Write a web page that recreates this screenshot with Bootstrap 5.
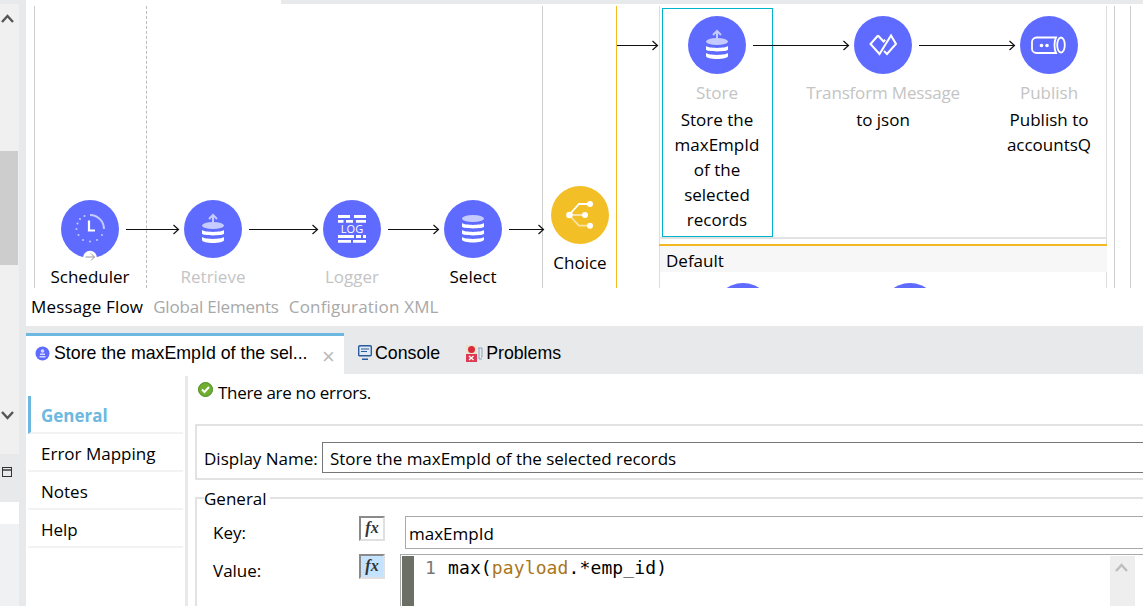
<!DOCTYPE html>
<html lang="en">
<head>
<meta charset="utf-8">
<title>Flow editor</title>
<link href="https://cdn.jsdelivr.net/npm/bootstrap@5.3.0/dist/css/bootstrap.min.css" rel="stylesheet">
<style>
html,body{height:606px;overflow:hidden;background:#fff}
body{font-family:"Open Sans","Noto Sans",sans-serif;font-size:17px;color:#000;line-height:25px}
.rail{width:26px;height:606px;background:#e8e9eb;flex:none}
.rail-track{width:19px;height:450px;margin-top:4px;background:#f0f0f0;position:relative;overflow:hidden}
.rail-thumb{width:18px;height:114px;margin-top:128px;background:#cdcdcd}
.rail-chev{display:block;margin:10px 0 0 1px}
.rail-chev2{display:block;margin:146px 0 0 1px}
.rail-min{width:19px;height:48px;padding:13px 2px 0 2px}
.rail-white{width:19px;height:22px;background:#fff}
.rail-low{width:19px;height:82px;background:#f0f1f3}
.mainc{width:1117px;height:606px;flex:none;overflow:hidden}
.top-strip{height:4px}
.top-strip-w{width:255px;background:#fff}
.top-strip-g{flex:1;background:#e8e9eb}
.canvasz{height:284px;position:relative;overflow:hidden;background:#fff}
.wires{position:absolute;left:0;top:0}
.vline{position:absolute;top:2px;bottom:0;width:1px;background:#ccc}
.vdash{background:none;border-left:1px dashed #bbb}
.vgold{background:#f4b921}
.vlight{background:#ddd}
.selbox{position:absolute;left:636px;top:4px;width:111px;height:229px;border:1.5px solid #00b4cc}
.hgray{position:absolute;left:633px;top:233px;width:448px;height:2px;background:#e2e2e2}
.hgold{position:absolute;left:633px;top:240px;width:448px;height:2px;background:#f4b921}
.defhead{position:absolute;left:634px;top:242px;width:447px;height:26px;background:#f7f7f7;padding-left:6px;line-height:30px}
.nodez{position:absolute;width:170px;margin-left:-85px;text-align:center}
.nodez svg{display:block;margin:0 auto 6px}
.dimz{color:#c4c4c4}
.node-text{width:95px;margin:2px auto 0}
.sched-name{margin-top:-8px}
.transform-name{letter-spacing:-.17px}
.flowtabs{height:38px;padding:6px 0 0 5px;gap:10px;color:#a8a8a8;background:#fff}
.flowtabs .on{color:#000;letter-spacing:.17px}
.ft-global{letter-spacing:-.2px}
.ft-config{letter-spacing:.18px}
.tabbar{height:48px;background:#e8e9eb;padding-top:7px;font-family:"Liberation Sans",Arial,sans-serif;font-size:17.75px}
.tab-act{width:318px;height:41px;background:#fff;border-top:3px solid #6cb8e0;padding:0 0 4px 9px;position:relative}
.tab-act span,.tab-oth span{line-height:30px}
.tab-act span.tab-x{position:absolute;left:296px;top:4px;color:#bbb;font-size:22px;line-height:34px}
.tab-oth{height:41px;padding:3px 0 4px;gap:3px}
.tab-console{margin-left:14px}
.tab-problems{margin-left:26px}
.panelz{height:232px}
.sidez{width:159px;flex:none;padding:22px 2px 0 2px}
.side-row{height:38px;border-bottom:2px solid #f3f3f3;padding:7px 0 0 13px;font-size:17px}
.side-on{border-left:3px solid #6cb8e0;padding-left:10px;color:#6cb8e0;font-weight:700}
.sepz{width:3px;background:#e8e9eb;height:232px;flex:none;margin-top:2px}
.formz{flex:1;padding:6px 0 0 7px;min-width:0}
.okrow{height:40px;gap:5px;padding:0 0 0 3px}
.okicon{margin-top:2px}
.oktext{line-height:26px;letter-spacing:-.3px}
.grp1{height:56px;border:2px solid #e2e2e2;border-right:0;margin:4px 0 0 0;padding:16px 0 0 7px}
.lbl1{width:118px;flex:none;padding-top:4px}
.inp-n{flex:1;height:31px;border:1px solid #777;border-right:0;padding:0 7px;line-height:31px;letter-spacing:-.03px}
.grp2{border:2px solid #e2e2e2;border-right:0;border-bottom:0;margin-top:17px;height:120px;position:relative;padding:17px 0 0 16px}
.legendz{position:absolute;left:7px;top:-12px;background:#fff;padding-right:3px;line-height:24px}
.rowk{width:146px;flex:none;padding-top:4px}
.rowv{margin-top:5px}
.fxb{width:26px;height:25px;flex:none;border:2px solid;border-color:#8a8a8a #e0e0e0 #e0e0e0 #8a8a8a;background:#fff;color:#333;font-family:"Liberation Serif",serif;font-style:italic;font-weight:700;font-size:16px;line-height:19px;text-align:center}
.fxb-on{background:#c5e3ff}
.inp-k{flex:1;height:33px;margin-left:20px;border:1px solid #aaa;border-right:0;padding:4px 3px;line-height:26px}
.editz{flex:1;margin-left:15px;height:60px;border-top:1px solid #aaa;border-left:1px solid #aaa;padding-top:1px;font-family:"DejaVu Sans Mono",monospace;font-size:18px;line-height:24px}
.gutterz{width:12px;flex:none;margin-left:1px;background:#6b6f66}
.lineno{color:#777;width:34px;padding-left:11px;flex:none}
.codez{flex:1;letter-spacing:.12px}
.kwz{color:#a9761a}
.sbz{width:25px;flex:none;margin-right:8px;background:#eee;padding:7px 0 0 5px}
</style>
</head>
<body>
<div class="d-flex">
  <div class="rail d-flex flex-column">
    <div class="rail-track">
      <svg class="rail-chev" width="13" height="9" viewBox="0 0 13 9"><path d="M1 8l5.500-6L12 8" fill="none" stroke="#555" stroke-width="2.400"/></svg>
      <div class="rail-thumb"></div>
      <svg class="rail-chev2" width="13" height="9" viewBox="0 0 13 9"><path d="M1 1l5.500 6L12 1" fill="none" stroke="#555" stroke-width="2.400"/></svg>
    </div>
    <div class="rail-min"><svg class="d-block" width="11" height="11" viewBox="0 0 11 11"><rect x=".5" y=".5" width="9" height="9" fill="none" stroke="#333"/><path d="M0 3h10" stroke="#333" stroke-width="1.400"/></svg></div>
    <div class="rail-white"></div>
    <div class="rail-low"></div>
  </div>
  <div class="mainc d-flex flex-column">
    <div class="top-strip d-flex"><div class="top-strip-w"></div><div class="top-strip-g"></div></div>
    <div class="canvasz">
      <div class="vline" style="left:8px"></div>
      <div class="vline vdash" style="left:120px"></div>
      <div class="vline" style="left:516px"></div>
      <div class="vline vgold" style="left:590px"></div>
      <div class="vline vlight" style="left:633px"></div>
      <div class="vline vlight" style="left:1080px"></div>
      <div class="vline" style="left:1088px"></div>
      <div class="vline" style="left:1104px"></div>
      <div class="selbox"></div>
      <div class="hgray"></div>
      <div class="hgold"></div>
      <div class="defhead">Default</div>
      <svg class="wires" width="1117" height="284" viewBox="0 0 1117 284" fill="none" stroke="#111" stroke-width="1.200">
        <path d="M100 225.500h52M147.500 221l5 4.500-5 4.500"/>
        <path d="M223 225.500h68M286.500 221l5 4.500-5 4.500"/>
        <path d="M362 225.500h50M407.500 221l5 4.500-5 4.500"/>
        <path d="M483 225.500h34M512.500 221l5 4.500-5 4.500"/>
        <path d="M591 41.500h40M626.500 37l5 4.500-5 4.500"/>
        <path d="M727 41.500h95M817.500 37l5 4.500-5 4.500"/>
        <path d="M893 41.500h95M983.500 37l5 4.500-5 4.500"/>
        <circle cx="717" cy="308" r="29" fill="#5f6bff" stroke="none"/>
        <circle cx="884" cy="308" r="29" fill="#5f6bff" stroke="none"/>
      </svg>

      <div class="nodez" style="left:64px;top:196px">
        <svg width="58" height="72" viewBox="0 0 58 72" style="margin-bottom:0;overflow:visible">
          <circle cx="29" cy="29" r="29" fill="#5f6bff"/>
          <path d="M29 15a14 14 0 0 1 14 14" fill="none" stroke="#c5caff" stroke-width="2"/>
          <g fill="#c5caff"><circle cx="19" cy="19" r="1"/><circle cx="15.500" cy="29" r="1"/><circle cx="16.500" cy="23.500" r="1"/><circle cx="17.500" cy="35" r="1"/><circle cx="22" cy="40" r="1"/><circle cx="29" cy="41.500" r="1"/><circle cx="36" cy="40" r="1"/><circle cx="41" cy="35" r="1"/><circle cx="23.500" cy="16" r="1"/></g>
          <path d="M28 20.500v10h6" fill="none" stroke="#fff" stroke-width="2.200"/>
          <circle cx="29" cy="57.500" r="6.800" fill="#fff"/>
          <path d="M24.500 57h9M30 53.500l3.500 3.500-3.500 3.500" fill="none" stroke="#999" stroke-width="1"/>
        </svg>
        <div class="sched-name">Scheduler</div>
      </div>

      <div class="nodez" style="left:187px;top:196px">
        <svg width="58" height="58" viewBox="0 0 58 58">
          <circle cx="29" cy="29" r="29" fill="#5f6bff"/>
          <path d="M29 23v-8M25 19l4-4 4 4" fill="none" stroke="#c5caff" stroke-width="2"/>
          <ellipse cx="29" cy="25.500" rx="11" ry="3.600" fill="#c5caff"/>
          <path d="M18 30c3 2.500 19 2.500 22 0v3.500c0 2.500-22 2.500-22 0zM18 37c3 2.500 19 2.500 22 0v3c0 4-22 4-22 0z" fill="#fff"/>
        </svg>
        <div class="dimz">Retrieve</div>
      </div>

      <div class="nodez" style="left:326px;top:196px">
        <svg width="58" height="58" viewBox="0 0 58 58">
          <circle cx="29" cy="29" r="29" fill="#5f6bff"/>
          <path d="M15 15h12v3H15zM31 15h12v3H31zM15 20h5.500v2.700H15zM23 20h7v2.700h-7zM33 20h10v2.700H33zM15 35h16v3H15zM33 35h5v3h-5zM40 35h3v3h-3zM15 40h13v2.700H15zM30 40h13v2.700H30z" fill="#fff"/>
          <text x="29" y="33" text-anchor="middle" fill="#fff" font-family="Open Sans,sans-serif" font-size="11">LOG</text>
        </svg>
        <div class="dimz">Logger</div>
      </div>

      <div class="nodez" style="left:447px;top:196px">
        <svg width="58" height="58" viewBox="0 0 58 58">
          <circle cx="29" cy="29" r="29" fill="#5f6bff"/>
          <ellipse cx="29" cy="18.500" rx="11" ry="3.600" fill="#c5caff"/>
          <path d="M18 23c3 2.500 19 2.500 22 0v3.500c0 2.500-22 2.500-22 0zM18 30c3 2.500 19 2.500 22 0v3.500c0 2.500-22 2.500-22 0zM18 37c3 2.500 19 2.500 22 0v2.500c0 4-22 4-22 0z" fill="#fff"/>
        </svg>
        <div>Select</div>
      </div>

      <div class="nodez" style="left:554px;top:182px">
        <svg width="58" height="58" viewBox="0 0 58 58">
          <circle cx="29" cy="29" r="29" fill="#f2bf26"/>
          <path d="M18 29H34M18 29l10 10.700h11" fill="none" stroke="#f9e4a3" stroke-width="1.800"/>
          <path d="M18 29L28 18h11" fill="none" stroke="#fff" stroke-width="1.800"/>
          <g fill="#fff"><circle cx="18.500" cy="29" r="3.300"/><circle cx="39" cy="18" r="3"/><circle cx="34" cy="29" r="3"/><circle cx="39" cy="39.700" r="3"/></g>
        </svg>
        <div>Choice</div>
      </div>

      <div class="nodez" style="left:691px;top:12px">
        <svg width="58" height="58" viewBox="0 0 58 58">
          <circle cx="29" cy="29" r="29" fill="#5f6bff"/>
          <path d="M29 23v-8M25 19l4-4 4 4" fill="none" stroke="#c5caff" stroke-width="2"/>
          <ellipse cx="29" cy="25.500" rx="11" ry="3.600" fill="#c5caff"/>
          <path d="M18 30c3 2.500 19 2.500 22 0v3.500c0 2.500-22 2.500-22 0zM18 37c3 2.500 19 2.500 22 0v3c0 4-22 4-22 0z" fill="#fff"/>
        </svg>
        <div class="dimz">Store</div>
        <div class="node-text">Store the maxEmpId of the selected records</div>
      </div>

      <div class="nodez" style="left:857px;top:12px">
        <svg width="58" height="58" viewBox="0 0 58 58">
          <circle cx="29" cy="29" r="29" fill="#5f6bff"/>
          <path d="M24 19.500L16.500 28l9 10L37 19.500 42 28l-9 10-3-3M24 19.500l5.500 6 1.700-1.800" fill="none" stroke="#fff" stroke-width="2"/>
        </svg>
        <div class="dimz transform-name">Transform Message</div>
        <div class="node-text">to json</div>
      </div>

      <div class="nodez" style="left:1023px;top:12px">
        <svg width="58" height="58" viewBox="0 0 58 58">
          <circle cx="29" cy="29" r="29" fill="#5f6bff"/>
          <path d="M36 21.500H16.500a4.500 4.500 0 0 0-4.500 4.500v6.500a4.500 4.500 0 0 0 4.500 4.500H36c-2-4-2-11.500 0-15.500z" fill="none" stroke="#fff" stroke-width="1.800"/>
          <ellipse cx="41" cy="29" rx="3.800" ry="7.500" fill="none" stroke="#fff" stroke-width="1.800"/>
          <circle cx="21.500" cy="29.500" r="1.800" fill="#fff"/><circle cx="27" cy="29.500" r="1.800" fill="#fff"/>
        </svg>
        <div class="dimz">Publish</div>
        <div class="node-text">Publish to accountsQ</div>
      </div>
    </div>

    <div class="flowtabs d-flex"><span class="on">Message Flow</span><span class="ft-global">Global Elements</span><span class="ft-config">Configuration XML</span></div>

    <div class="tabbar d-flex">
      <div class="tab-act d-flex align-items-center align-self-start">
        <svg width="15" height="15" viewBox="0 0 15 15" class="me-1 flex-none"><circle cx="7.500" cy="7.500" r="7" fill="#5f6bff"/><path d="M5 7.500h5v1.500H5zM4.500 10h6v1.500h-6z" fill="#d5d8ff"/><circle cx="7.500" cy="5" r="1.800" fill="#d5d8ff"/></svg>
        <span>Store the maxEmpId of the sel...</span>
        <span class="tab-x">×</span>
      </div>
      <div class="tab-oth tab-console d-flex align-items-center">
        <svg width="14" height="16" viewBox="0 0 14 16"><rect x=".7" y=".7" width="12.600" height="10" rx="1" fill="#dfe9f5" stroke="#2a5b9c" stroke-width="1.400"/><path d="M3 4h8M3 6.500h6" stroke="#2a5b9c"/><path d="M4 13.500h6v1.500H4z" fill="#2a5b9c"/></svg>
        <span>Console</span>
      </div>
      <div class="tab-oth tab-problems d-flex align-items-center">
        <svg width="17" height="17" viewBox="0 0 17 17"><rect x="0" y="0" width="11" height="17" fill="#e9e3cf"/><circle cx="5.500" cy="4.500" r="3.500" fill="#d92b3a"/><rect x="0" y="9" width="11" height="8" fill="#dc3a52"/><path d="M3 11l4.500 4M7.500 11L3 15" stroke="#fff" stroke-width="1.300"/><path d="M12 3h4v9h-1M13 3v11h3" fill="none" stroke="#8aa3c2"/></svg>
        <span>Problems</span>
      </div>
    </div>

    <div class="panelz d-flex">
      <div class="sidez">
        <div class="side-row side-on">General</div>
        <div class="side-row">Error Mapping</div>
        <div class="side-row">Notes</div>
        <div class="side-row">Help</div>
      </div>
      <div class="sepz"></div>
      <div class="formz">
        <div class="okrow d-flex align-items-start">
          <svg class="okicon" width="15" height="15" viewBox="0 0 15 15"><circle cx="7.500" cy="7.500" r="7" fill="#6fae2e" stroke="#4b8a1c"/><path d="M4 7.500l2.500 2.500L11 5" fill="none" stroke="#fff" stroke-width="2"/></svg>
          <span class="oktext">There are no errors.</span>
        </div>
        <div class="grp1 d-flex align-items-start">
          <div class="lbl1">Display Name:</div>
          <div class="inp-n">Store the maxEmpId of the selected records</div>
        </div>
        <div class="grp2">
          <span class="legendz">General</span>
          <div class="d-flex align-items-start">
            <div class="rowk">Key:</div>
            <div class="fxb">fx</div>
            <div class="inp-k">maxEmpId</div>
          </div>
          <div class="d-flex align-items-start rowv">
            <div class="rowk">Value:</div>
            <div class="fxb fxb-on">fx</div>
            <div class="editz d-flex">
              <div class="gutterz"></div>
              <div class="lineno">1</div>
              <div class="codez">max(<span class="kwz">payload</span>.*emp_id)</div>
              <div class="sbz"><svg class="d-block" width="13" height="9" viewBox="0 0 13 9"><path d="M1 8l5.500-6L12 8" fill="none" stroke="#bdbdbd" stroke-width="2.400"/></svg></div>
            </div>
          </div>
        </div>
      </div>
    </div>
  </div>
</div>
<script src="https://cdn.jsdelivr.net/npm/bootstrap@5.3.0/dist/js/bootstrap.bundle.min.js"></script>
</body>
</html>
